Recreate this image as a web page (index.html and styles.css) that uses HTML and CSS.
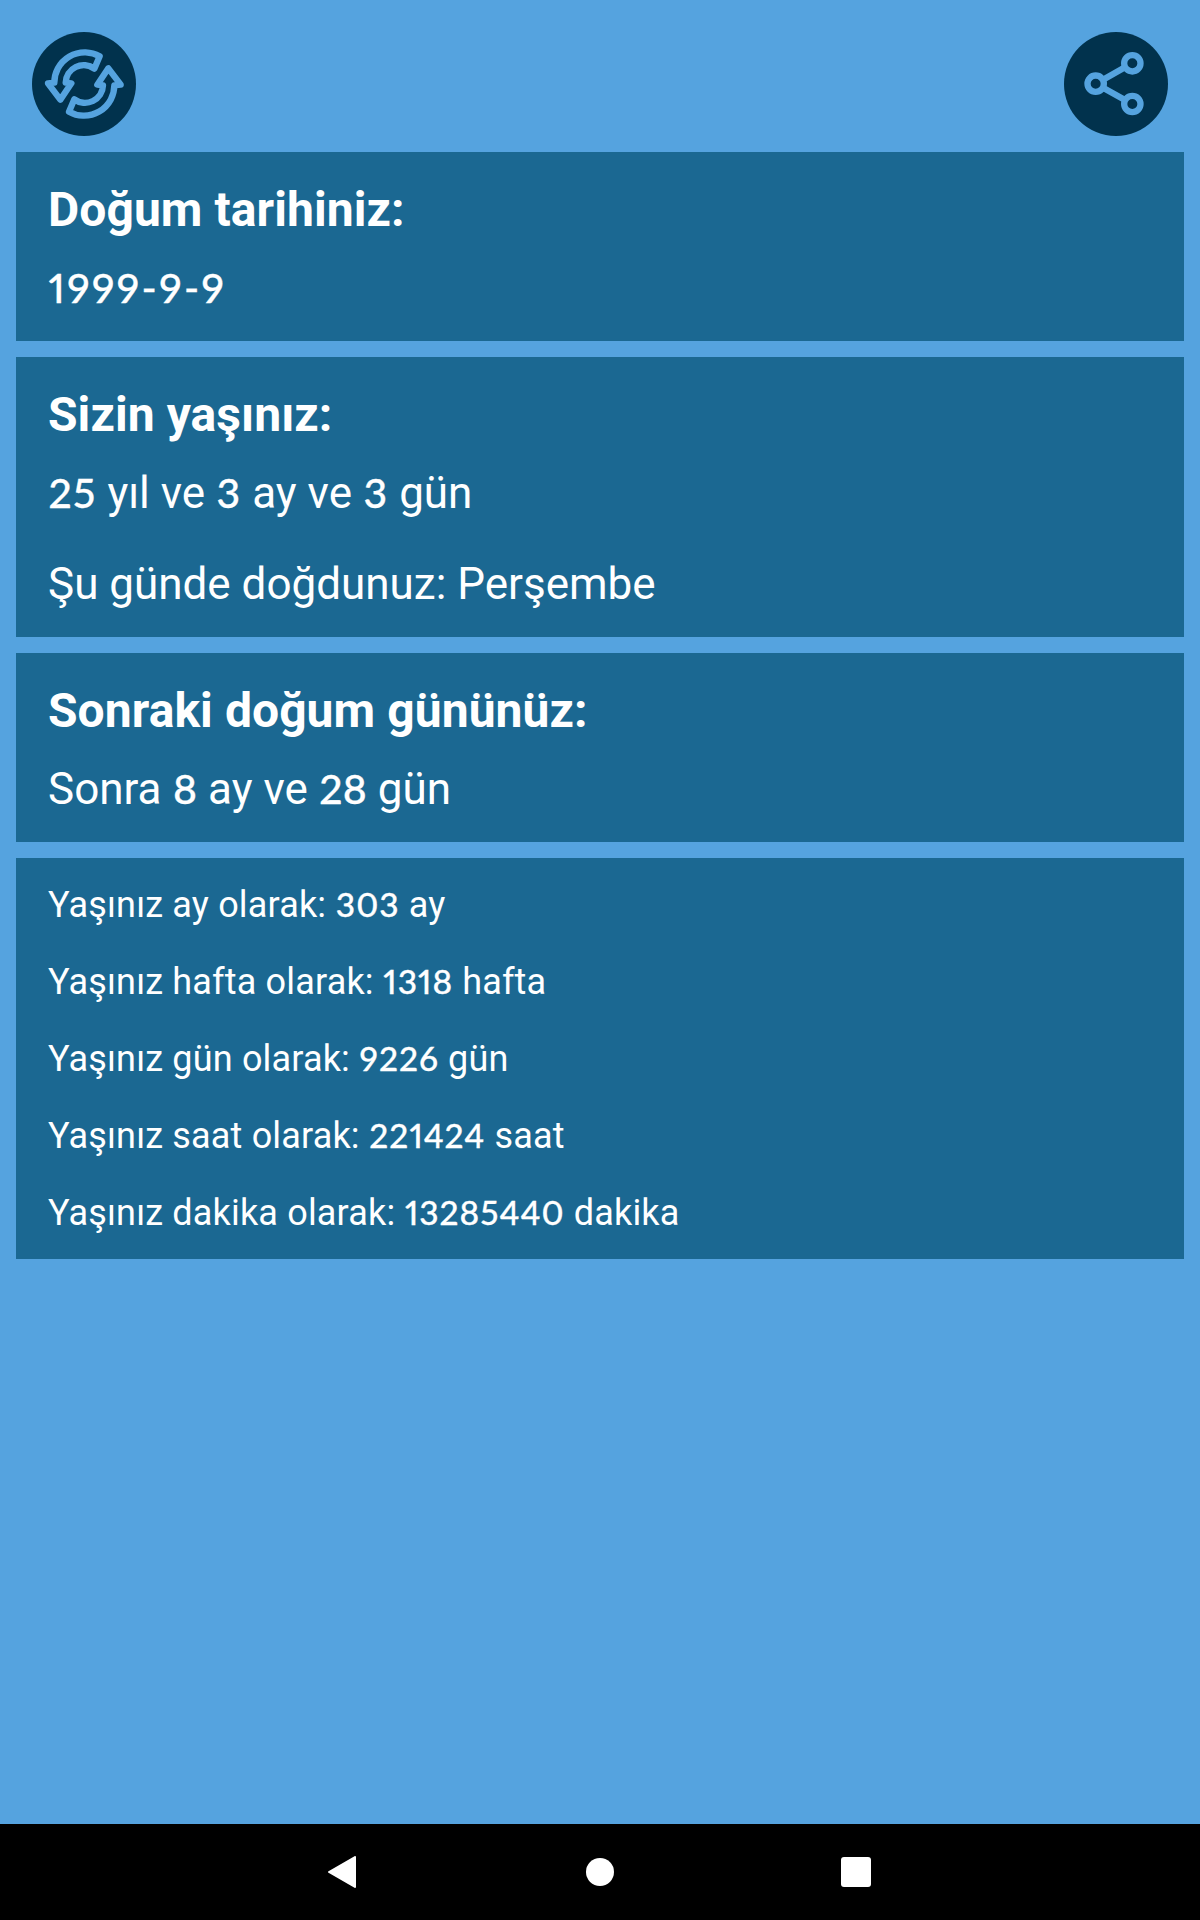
FILE: index.html
```html
<!DOCTYPE html>
<html lang="tr">

<head>
    <meta charset="UTF-8">
    <meta name="viewport" content="width=device-width, initial-scale=1.0">
    <title>Yaş Hesaplama</title>
    <link rel="stylesheet" href="styles.css">
</head>

<body>
    <div class="toolbar">
        <button type="button" class="icon-btn" aria-label="Yenile">
            <svg viewBox="36 36 312 312">
                <circle class="icon-bg" cx="192" cy="192" r="156" />
                <g class="icon-line">
                    <path id="arrow" d="M239 109 A91 91 0 0 0 103 188 L84 190 L121 239 L154 190 L137 188 A54 54 0 0 1 223 146 Z" />
                    <use href="#arrow" transform="rotate(180 193 192)" />
                </g>
            </svg>
        </button>
        <button type="button" class="icon-btn" aria-label="Paylaş">
            <svg viewBox="42 36 312 312">
                <circle class="icon-bg" cx="198" cy="192" r="156" />
                <g class="icon-line share">
                    <circle cx="137" cy="191" r="24.5" />
                    <circle cx="247" cy="130" r="24.5" />
                    <circle cx="247" cy="252" r="24.5" />
                    <path d="M159 179 L225 142 M159 203 L225 240" />
                </g>
            </svg>
        </button>
    </div>

    <div class="cards">
        <div class="card">
            <h2>Doğum tarihiniz:</h2>
            <p><span class="num date">1999-9-9</span></p>
        </div>
        <div class="card">
            <h2>Sizin yaşınız:</h2>
            <p><span class="num">25</span> yıl ve <span class="num">3</span> ay ve <span class="num">3</span> gün</p>
            <p>Şu günde doğdunuz: Perşembe</p>
        </div>
        <div class="card">
            <h2>Sonraki doğum gününüz:</h2>
            <p>Sonra <span class="num tight">8</span> ay ve <span class="num tight">28</span> gün</p>
        </div>
        <div class="card totals">
            <p>Yaşınız ay olarak: <span class="num">303</span> ay</p>
            <p>Yaşınız hafta olarak: <span class="num">1318</span> hafta</p>
            <p>Yaşınız gün olarak: <span class="num">9226</span> gün</p>
            <p>Yaşınız saat olarak: <span class="num">221424</span> saat</p>
            <p>Yaşınız dakika olarak: <span class="num">13285440</span> dakika</p>
        </div>
    </div>

    <div class="navbar">
        <svg viewBox="0 0 32 32">
            <path class="back" d="M1 16 L27 1 V31 Z" />
        </svg>
        <svg viewBox="0 0 32 32">
            <circle cx="16" cy="16" r="14" />
        </svg>
        <svg viewBox="0 0 32 32">
            <rect x="1" y="1" width="30" height="30" rx="3" />
        </svg>
    </div>
</body>

</html>
```

FILE: styles.css
```css
body {
    display: flex;
    flex-direction: column;
    height: 1920px;
    margin: 0;
    background-color: #55a3df;
    color: #fff;
    font-family: Roboto, sans-serif;
}

.toolbar {
    display: flex;
    justify-content: space-between;
    padding: 32px 32px 16px;
}

.icon-btn {
    width: 104px;
    height: 104px;
    padding: 0;
    border: none;
    background: none;
    cursor: pointer;
}

.icon-btn svg {
    display: block;
}

.icon-bg {
    fill: #01324d;
}

.icon-line {
    fill: none;
    stroke: #55a3df;
    stroke-width: 19;
    stroke-linejoin: round;
}

.share {
    stroke-width: 19;
}

.cards {
    display: flex;
    flex: 1;
    flex-direction: column;
    gap: 16px;
    padding: 0 16px;
}

.card {
    padding: 32px 32px 25px;
    background-color: #1b6892;
}

h2 {
    margin: 0 0 25px;
    font-size: 48px;
    font-weight: 700;
    line-height: 51px;
    letter-spacing: 0.07px;
}

p {
    margin: 0;
    font-size: 44px;
    line-height: 56px;
}

p + p {
    margin-top: 35px;
}

/* Numbers use a rounder face than the labels */
.num {
    margin-left: 0.5px;
    font-family: Lato, sans-serif;
    font-size: 0.93em;
    font-weight: 500;
    line-height: 1;
    letter-spacing: 0.03em;
    font-feature-settings: "pnum";
    -webkit-text-stroke: 0.3px #fff;
}

.date {
    letter-spacing: 0.058em;
}

.tight {
    letter-spacing: 0.005em;
}

.totals {
    padding: 9px 32px 7px;
}

.totals p {
    margin: 0;
    font-size: 36px;
    line-height: 77px;
    letter-spacing: 0.17px;
}

.navbar {
    display: flex;
    align-items: center;
    justify-content: center;
    gap: 224px;
    height: 96px;
    background-color: #000;
}

.navbar svg {
    width: 32px;
    height: 32px;
    fill: #fff;
}

.back {
    stroke: #fff;
    stroke-width: 2;
    stroke-linejoin: round;
}
```
